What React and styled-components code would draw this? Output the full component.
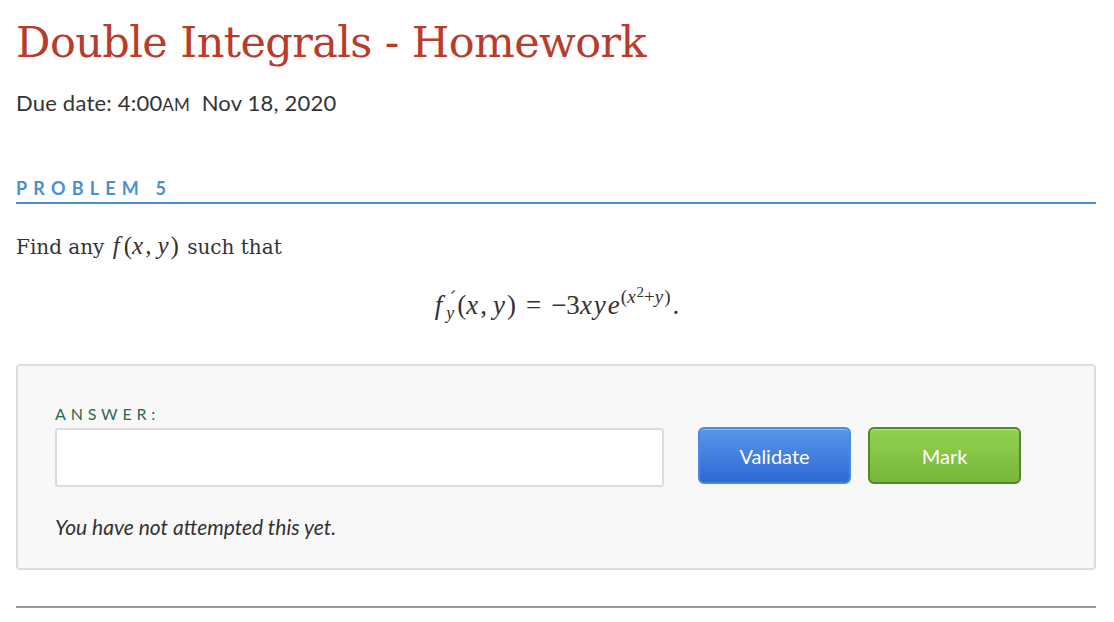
import React from "react";
import styled, { createGlobalStyle } from "styled-components";

const GlobalStyles = createGlobalStyle`
    body {
        margin: 0;
        background: #fff;
        font-family: Lato, "Liberation Sans", sans-serif;
    }
`;

const Page = styled.div`
    padding: 0 18px 0 16px;
`;

const Title = styled.h1`
    margin: 0;
    padding-top: 14px;
    font-family: "DejaVu Serif", "Liberation Serif", serif;
    font-weight: normal;
    font-size: 43px;
    line-height: 56px;
    letter-spacing: -0.6px;
    color: #b83b2c;
`;

const DueDate = styled.div`
    margin-top: 20px;
    font-family: Lato, sans-serif;
    font-size: 22px;
    line-height: 26px;
    letter-spacing: 0.2px;
    color: #333;
    small {
        font-size: 17px;
    }
`;

const ProblemHead = styled.h2`
    margin: 59px 0 0;
    padding-bottom: 3px;
    border-bottom: 2px solid #4a8fd1;
    font-family: Lato, sans-serif;
    font-weight: bold;
    font-size: 18px;
    line-height: 22px;
    letter-spacing: 6.2px;
    color: #4a90d2;
`;

const Statement = styled.p`
    margin: 27px 0 0;
    font-family: "DejaVu Serif", serif;
    font-size: 20px;
    line-height: 30px;
    color: #333;
`;

const Mi = styled.i`
    font-family: "Liberation Serif", "Times New Roman", serif;
    font-size: ${(p) => p.size || 27}px;
    margin-right: ${(p) => p.gap || 1}px;
`;

const Mo = styled.span`
    font-family: "Liberation Serif", "Times New Roman", serif;
    font-size: ${(p) => p.size || 27}px;
    margin: 0 ${(p) => p.right || 0}px 0 ${(p) => p.left || 0}px;
`;

const Inline = styled.span`
    white-space: nowrap;
    margin: 0 2px;
`;

const Equation = styled.div`
    margin-top: 21px;
    text-align: center;
    line-height: 40px;
    height: 40px;
    color: #333;
    padding-left: 2px;
`;

const Scripts = styled.span`
    display: inline-flex;
    flex-direction: column;
    vertical-align: 9px;
    line-height: 15px;
    margin-left: 3px;
    margin-right: 2px;
`;

const Prime = styled.span`
    font-family: "DejaVu Sans", sans-serif;
    font-size: 20px;
    line-height: 15px;
    padding-left: 3px;
    transform: skewX(-12deg);
`;

const Sup = styled.span`
    display: inline-block;
    vertical-align: ${(p) => p.raise || 10}px;
    line-height: 1;
`;

const AnswerBox = styled.div`
    margin-top: 41px;
    background: #f8f8f8;
    border: 2px solid #dcdcdc;
    border-radius: 4px;
    padding: 38px 36px 28px 37px;
`;

const Label = styled.div`
    font-family: Lato, sans-serif;
    font-weight: 400;
    font-size: 16px;
    line-height: 20px;
    letter-spacing: 4.8px;
    color: #2d6a4f;
    margin-bottom: 4px;
`;

const Row = styled.div`
    display: flex;
    align-items: flex-start;
    gap: 34px;
`;

const Input = styled.input`
    width: 609px;
    height: 59px;
    box-sizing: border-box;
    border: 2px solid #dcdcdc;
    border-radius: 3px;
    background: #fff;
    outline: none;
`;

const Buttons = styled.div`
    display: flex;
    gap: 17px;
    margin-top: -1px;
`;

const Button = styled.button`
    width: 153px;
    height: 57px;
    box-sizing: border-box;
    border-radius: 6px;
    font-family: Lato, sans-serif;
    font-size: 20px;
    color: #fff;
    cursor: pointer;
    border: 2px solid ${(p) => (p.green ? "#4f8a2a" : "#4a88e4")};
    background: ${(p) =>
        p.green
            ? "linear-gradient(#92d14f, #78b73b)"
            : "linear-gradient(#5896ea, #3068d4)"};
    box-shadow: inset 0 1px 0 rgba(255, 255, 255, 0.35);
`;

const Status = styled.p`
    margin: 27px 0 0;
    font-family: Lato, sans-serif;
    font-style: italic;
    font-size: 21px;
    line-height: 26px;
    color: #333;
`;

const Rule = styled.hr`
    margin: 36px 0 0;
    border: none;
    border-top: 2px solid #999;
`;

export default function App() {
    return (
        <Page>
            <GlobalStyles />
            <Title>Double Integrals - Homework</Title>
            <DueDate>
                Due date: 4:00<small>AM</small>&nbsp; Nov 18, 2020
            </DueDate>
            <ProblemHead>PROBLEM 5</ProblemHead>
            <Statement>
                Find any{" "}
                <Inline>
                    <Mi size={25} gap={4}>f</Mi>
                    <Mo size={25}>(</Mo>
                    <Mi size={25} gap={2}>x</Mi>
                    <Mo size={25} right={6}>,</Mo>
                    <Mi size={25} gap={2}>y</Mi>
                    <Mo size={25}>)</Mo>
                </Inline>{" "}
                such that
            </Statement>
            <Equation>
                <Mi gap={1}>f</Mi>
                <Scripts>
                    <Prime>′</Prime>
                    <Mi size={18}>y</Mi>
                </Scripts>
                <Mo>(</Mo>
                <Mi gap={2}>x</Mi>
                <Mo right={6}>,</Mo>
                <Mi gap={2}>y</Mi>
                <Mo>)</Mo>
                <Mo left={10} right={10}>=</Mo>
                <Mo>−3</Mo>
                <Mi gap={2}>x</Mi>
                <Mi gap={2}>y</Mi>
                <Mi>e</Mi>
                <Sup raise={11}>
                    <Mo size={19}>(</Mo>
                    <Mi size={19}>x</Mi>
                    <Sup raise={6}>
                        <Mo size={15}>2</Mo>
                    </Sup>
                    <Mo size={19}>+</Mo>
                    <Mi size={19}>y</Mi>
                    <Mo size={19}>)</Mo>
                </Sup>
                <Mo left={2}>.</Mo>
            </Equation>
            <AnswerBox>
                <Label>ANSWER:</Label>
                <Row>
                    <Input />
                    <Buttons>
                        <Button>Validate</Button>
                        <Button green>Mark</Button>
                    </Buttons>
                </Row>
                <Status>You have not attempted this yet.</Status>
            </AnswerBox>
            <Rule />
        </Page>
    );
}
